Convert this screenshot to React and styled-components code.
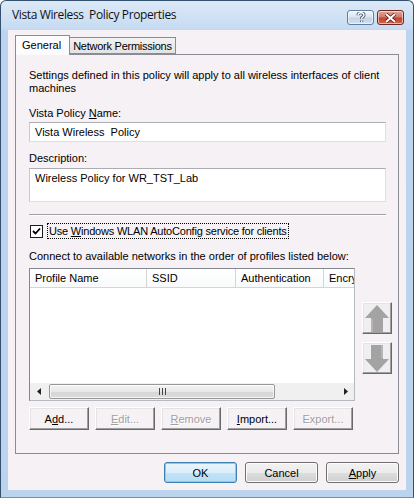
import React from 'react';
import styled, { createGlobalStyle } from 'styled-components';

const GlobalStyle = createGlobalStyle`
  html, body {
    margin: 0;
    padding: 0;
    background: #ffffff;
  }
  body {
    font-family: "Liberation Sans", Arial, sans-serif;
    font-size: 11px;
    color: #000;
  }
`;

const Window = styled.div`
  width: 414px;
  height: 498px;
  box-sizing: border-box;
  border: 1px solid #34506f;
  border-bottom-color: #2ab0cc;
  border-radius: 6px 6px 0 0;
  background: linear-gradient(#dce9f7 0px, #c6dbf2 28px, #bdd4ef 30px, #bcd3ee 100%);
  display: flex;
  flex-direction: column;
  overflow: hidden;
`;

const TitleBar = styled.div`
  height: 29px;
  display: flex;
  align-items: center;
  padding: 0 9px 0 11px;
  flex-shrink: 0;
`;

const Title = styled.div`
  flex: 1;
  font-family: "Open Sans", "Liberation Sans", sans-serif;
  font-size: 12px;
  letter-spacing: -0.38px;
  color: #111;
  padding-bottom: 2px;
`;

const CaptionButtons = styled.div`
  display: flex;
  gap: 3px;
  align-self: flex-start;
  margin-top: 9px;
`;

const CaptionButton = styled.div`
  width: 27px;
  height: 15px;
  box-sizing: border-box;
  border: 1px solid ${p => (p.$close ? '#6d2a25' : '#5f7d9c')};
  border-radius: 3px;
  background: ${p =>
    p.$close
      ? 'linear-gradient(#e4a398 0%, #d27b6d 45%, #c0432f 55%, #d0664f 100%)'
      : 'linear-gradient(#f2f6fb 0%, #dbe6f2 45%, #c3d4e8 55%, #d2e0ef 100%)'};
  display: flex;
  align-items: center;
  justify-content: center;
  box-shadow: inset 0 0 0 1px rgba(255, 255, 255, 0.55);
`;

const Client = styled.div`
  flex: 1;
  margin: 0 7px 7px 7px;
  background: #f5f1f5;
  display: flex;
  flex-direction: column;
  padding: 5px 7px 7px 7px;
`;

const TabStrip = styled.div`
  display: flex;
  align-items: flex-end;
  height: 19px;
  position: relative;
  z-index: 1;
`;

const Tab = styled.div`
  box-sizing: border-box;
  height: ${p => (p.$active ? '20px' : '17px')};
  padding: ${p => (p.$active ? '3px 8px 0 6px' : '2px 3px 0 3px')};
  border: 1px solid #898c95;
  border-bottom: ${p => (p.$active ? 'none' : '1px solid #898c95')};
  border-left: ${p => (p.$active ? '1px solid #898c95' : 'none')};
  background: ${p => (p.$active ? '#fcfcfe' : 'linear-gradient(#f2f2f2, #e3e3e3)')};
  margin-bottom: ${p => (p.$active ? '-1px' : '0')};
  letter-spacing: ${p => (p.$active ? '0' : '-0.25px')};
  color: #000;
  white-space: nowrap;
`;

const TabPanel = styled.div`
  flex: 1;
  border: 1px solid #898c95;
  display: flex;
  flex-direction: column;
  padding: 14px 12px 0 13px;
`;

const Para = styled.div`
  line-height: 13px;
  margin-top: ${p => p.$mt || 0}px;
  white-space: nowrap;
`;

const TextBox = styled.div`
  box-sizing: border-box;
  height: ${p => p.$h || 20}px;
  margin-top: ${p => p.$mt || 0}px;
  background: #fff;
  border: 1px solid #dbdfe6;
  border-top-color: #abadb3;
  border-left-color: #c6cad1;
  padding: 3px 5px;
  line-height: 13px;
`;

const Separator = styled.div`
  height: 0;
  border-top: 1px solid #a0a0a0;
  border-bottom: 1px solid #ffffff;
  margin-top: 12px;
`;

const CheckRow = styled.div`
  display: flex;
  align-items: center;
  height: 16px;
  margin-top: 7px;
`;

const CheckBox = styled.div`
  width: 13px;
  height: 13px;
  box-sizing: border-box;
  border: 1px solid #1c1c1c;
  background: #fff;
  display: flex;
  align-items: center;
  justify-content: center;
  margin: 0 4px 0 1px;
`;

const FocusLabel = styled.div`
  border: 1px dotted #000;
  padding: 1px 1px 0 1px;
  line-height: 13px;
  letter-spacing: -0.2px;
`;

const ListArea = styled.div`
  display: flex;
  gap: 7px;
  margin-top: 5px;
`;

const ListView = styled.div`
  width: 326px;
  height: 133px;
  box-sizing: border-box;
  border: 1px solid #828790;
  border-right-color: #b5b9c0;
  border-bottom-color: #b5b9c0;
  background: #fff;
  display: flex;
  flex-direction: column;
`;

const HeaderRow = styled.div`
  display: flex;
  height: 19px;
  box-sizing: border-box;
  border-bottom: 1px solid #d5d5d5;
  background: linear-gradient(#ffffff, #f9fafb);
  overflow: hidden;
  flex-shrink: 0;
`;

const HeaderCell = styled.div`
  width: ${p => p.$w}px;
  flex-shrink: 0;
  box-sizing: border-box;
  padding: 3px 0 0 5px;
  border-right: 1px solid #d5d5d5;
  white-space: nowrap;
  overflow: hidden;
`;

const ListBody = styled.div`
  flex: 1;
`;

const HScroll = styled.div`
  height: 16px;
  display: flex;
  align-items: center;
  background: #f0f0f0;
  padding: 0 0 1px 0;
`;

const ScrollArrow = styled.div`
  width: 17px;
  height: 16px;
  display: flex;
  align-items: center;
  justify-content: center;
  flex-shrink: 0;
`;

const ScrollTrack = styled.div`
  flex: 1;
  height: 16px;
  display: flex;
  align-items: center;
  padding-left: 2px;
`;

const ScrollThumb = styled.div`
  width: 226px;
  height: 15px;
  box-sizing: border-box;
  border: 1px solid #989898;
  border-radius: 2px;
  background: linear-gradient(#f3f3f3 0%, #e8e8e8 50%, #d6d6d6 51%, #dcdcdc 100%);
  display: flex;
  align-items: center;
  justify-content: center;
  box-shadow: inset 0 0 0 1px rgba(255, 255, 255, 0.7);
`;

const SideButtons = styled.div`
  display: flex;
  flex-direction: column;
  gap: 8px;
  padding-top: 34px;
`;

const ArrowButton = styled.div`
  width: 30px;
  height: 32px;
  box-sizing: border-box;
  border: 1px solid;
  border-color: #fff #696969 #696969 #fff;
  box-shadow: inset -1px -1px 0 #a0a0a0, inset 1px 1px 0 #e3e3e3;
  background: #f0eef0;
  display: flex;
  align-items: center;
  justify-content: center;
`;

const ButtonRow = styled.div`
  display: flex;
  gap: 6px;
  margin-top: 6px;
`;

const ClassicButton = styled.div`
  width: 60px;
  height: 23px;
  box-sizing: border-box;
  border: 1px solid;
  border-color: #fff #696969 #696969 #fff;
  box-shadow: inset -1px -1px 0 #a0a0a0, inset 1px 1px 0 #e3e3e3;
  background: #f5f1f5;
  display: flex;
  align-items: center;
  justify-content: center;
  color: ${p => (p.$disabled ? '#a0a0a0' : '#000')};
  text-shadow: ${p => (p.$disabled ? '1px 1px 0 #fff' : 'none')};
`;

const Footer = styled.div`
  display: flex;
  justify-content: flex-end;
  gap: 8px;
  margin-top: 8px;
`;

const VistaButton = styled.div`
  width: 73px;
  height: 21px;
  box-sizing: border-box;
  border: 1px solid ${p => (p.$default ? '#3c7fb1' : '#707070')};
  border-radius: 3px;
  background: ${p =>
    p.$default
      ? 'linear-gradient(#e9f5fc 0%, #dbeefa 50%, #c2e4f8 51%, #b6dcf4 100%)'
      : 'linear-gradient(#f2f2f2 0%, #ebebeb 50%, #dddddd 51%, #cfcfcf 100%)'};
  box-shadow: inset 0 0 0 1px ${p => (p.$default ? '#7fd0f4' : '#fcfcfc')};
  display: flex;
  align-items: center;
  justify-content: center;
`;

const U = styled.span`
  text-decoration: underline;
`;

const HelpGlyph = () => (
  <svg width="10" height="11" viewBox="0 0 10 11">
    <path
      d="M2 3.2 C2 1.4 3.4 0.8 5 0.8 C6.8 0.8 8 1.7 8 3.2 C8 4.6 6.3 5 5.7 5.8 L5.7 7 M5.7 8.6 L5.7 10"
      fill="none"
      stroke="#3a4a5c"
      strokeWidth="3"
    />
    <path
      d="M2 3.2 C2 1.4 3.4 0.8 5 0.8 C6.8 0.8 8 1.7 8 3.2 C8 4.6 6.3 5 5.7 5.8 L5.7 7 M5.7 8.6 L5.7 10"
      fill="none"
      stroke="#fff"
      strokeWidth="1.4"
    />
  </svg>
);

const CloseGlyph = () => (
  <svg width="13" height="10" viewBox="0 0 13 10">
    <path d="M2 1 L11 9 M11 1 L2 9" stroke="#5a1e18" strokeWidth="3.6" />
    <path d="M2 1 L11 9 M11 1 L2 9" stroke="#fff" strokeWidth="2" />
  </svg>
);

const Check = () => (
  <svg width="9" height="9" viewBox="0 0 9 9">
    <path d="M1 4 L3.5 6.5 L8 1.5" fill="none" stroke="#000" strokeWidth="1.8" />
  </svg>
);

const SmallTriangle = ({ dir }) => (
  <svg width="4" height="7" viewBox="0 0 4 7">
    {dir === 'left' ? <polygon points="4,0 0,3.5 4,7" fill="#222" /> : <polygon points="0,0 4,3.5 0,7" fill="#222" />}
  </svg>
);

const Grip = () => (
  <svg width="7" height="7" viewBox="0 0 7 7">
    <rect x="0" y="0" width="1" height="7" fill="#444" />
    <rect x="3" y="0" width="1" height="7" fill="#444" />
    <rect x="6" y="0" width="1" height="7" fill="#444" />
  </svg>
);

const BigArrow = ({ down }) => (
  <svg width="26" height="29" viewBox="0 0 26 29" style={down ? { transform: 'rotate(180deg)' } : undefined}>
    <polygon points="13,1 25,14 19,14 19,28 7,28 7,14 1,14" fill="#a3a3a3" />
    <polyline points="8,28 8,15" stroke="#c8c8c8" strokeWidth="1" fill="none" />
  </svg>
);

const columns = [
  { title: 'Profile Name', w: 117 },
  { title: 'SSID', w: 89 },
  { title: 'Authentication', w: 88 },
  { title: 'Encryption', w: 80 },
];

export default function App() {
  return (
    <>
      <GlobalStyle />
      <Window>
        <TitleBar>
          <Title>Vista Wireless&nbsp; Policy Properties</Title>
          <CaptionButtons>
            <CaptionButton>
              <HelpGlyph />
            </CaptionButton>
            <CaptionButton $close>
              <CloseGlyph />
            </CaptionButton>
          </CaptionButtons>
        </TitleBar>
        <Client>
          <TabStrip>
            <Tab $active>General</Tab>
            <Tab>Network Permissions</Tab>
          </TabStrip>
          <TabPanel>
            <Para>Settings defined in this policy will apply to all wireless interfaces of client</Para>
            <Para>machines</Para>
            <Para $mt={12}>
              Vista Policy <U>N</U>ame:
            </Para>
            <TextBox $mt={2}>Vista Wireless&nbsp; Policy</TextBox>
            <Para $mt={10}>Description:</Para>
            <TextBox $mt={3} $h={34}>
              Wireless Policy for WR_TST_Lab
            </TextBox>
            <Separator />
            <CheckRow>
              <CheckBox>
                <Check />
              </CheckBox>
              <FocusLabel>
                Use <U>W</U>indows WLAN AutoConfig service for clients
              </FocusLabel>
            </CheckRow>
            <Para $mt={11}>Connect to available networks in the order of profiles listed below:</Para>
            <ListArea>
              <ListView>
                <HeaderRow>
                  {columns.map(c => (
                    <HeaderCell key={c.title} $w={c.w}>
                      {c.title}
                    </HeaderCell>
                  ))}
                </HeaderRow>
                <ListBody />
                <HScroll>
                  <ScrollArrow>
                    <SmallTriangle dir="left" />
                  </ScrollArrow>
                  <ScrollTrack>
                    <ScrollThumb>
                      <Grip />
                    </ScrollThumb>
                  </ScrollTrack>
                  <ScrollArrow>
                    <SmallTriangle dir="right" />
                  </ScrollArrow>
                </HScroll>
              </ListView>
              <SideButtons>
                <ArrowButton>
                  <BigArrow />
                </ArrowButton>
                <ArrowButton>
                  <BigArrow down />
                </ArrowButton>
              </SideButtons>
            </ListArea>
            <ButtonRow>
              <ClassicButton>
                <span>
                  A<U>d</U>d...
                </span>
              </ClassicButton>
              <ClassicButton $disabled>
                <span>
                  <U>E</U>dit...
                </span>
              </ClassicButton>
              <ClassicButton $disabled>
                <span>
                  <U>R</U>emove
                </span>
              </ClassicButton>
              <ClassicButton>
                <span>
                  <U>I</U>mport...
                </span>
              </ClassicButton>
              <ClassicButton $disabled>
                <span>Export...</span>
              </ClassicButton>
            </ButtonRow>
          </TabPanel>
          <Footer>
            <VistaButton $default>OK</VistaButton>
            <VistaButton>Cancel</VistaButton>
            <VistaButton>
              <span>
                <U>A</U>pply
              </span>
            </VistaButton>
          </Footer>
        </Client>
      </Window>
    </>
  );
}
